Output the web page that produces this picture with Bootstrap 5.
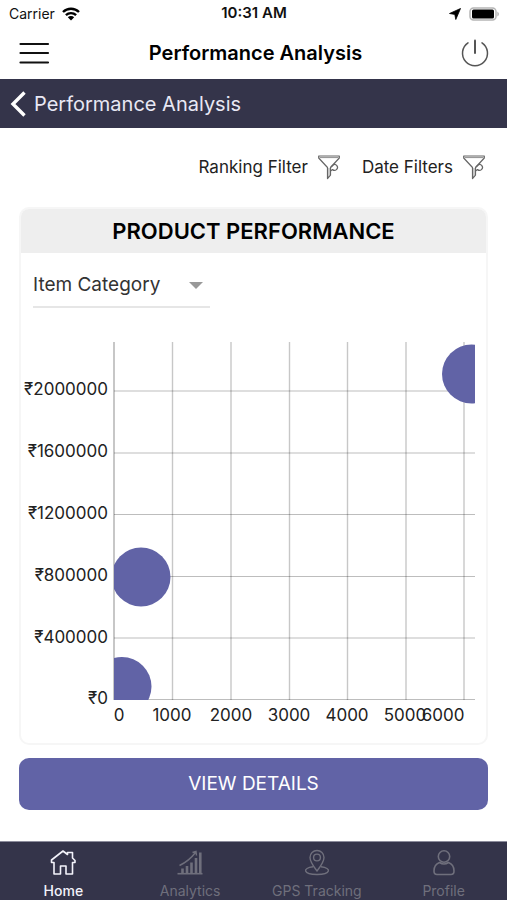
<!DOCTYPE html>
<html lang="en">
<head>
<meta charset="utf-8">
<meta name="viewport" content="width=device-width, initial-scale=1">
<title>Performance Analysis</title>
<link href="https://cdn.jsdelivr.net/npm/bootstrap@5.3.0/dist/css/bootstrap.min.css" rel="stylesheet">
<style>
  :root { --navy: #34344a; --violet: #6163a6; }
  body { font-family: Inter, "Noto Sans", sans-serif; color: #111; background: #fff; }
  svg { display: block; flex-shrink: 0; }
  .status-bar { height: 27px; font-size: 14px; padding: 0 8px 0 9px; }
  .status-bar .carrier { gap: 7px; }
  .status-time { font-size: 15px; font-weight: 600; }
  .app-head { height: 51px; margin-bottom: 1px; padding: 0 18px; }
  .app-title { font-size: 20px; font-weight: 600; color: #000; }
  .page-bar { background: var(--navy); height: 49px; padding: 0 10px; font-size: 20px; color: #e8e8f4; }
  .page-bar a { color: inherit; }
  .filter-row { padding: 21px 22px 22px; gap: 22px; }
  .filter-btn { font-size: 17px; line-height: 24px; color: #222; gap: 10px; padding: 5px 0; border: 0; }
  .page-body { padding: 0 19px; }
  .perf-card { border: 2px solid #f6f6f6; border-radius: 10px; overflow: hidden; }
  .perf-title { background: #eee; font-size: 22px; line-height: 26px; font-weight: 600; color: #000; padding: 9px 0; }
  .category-pick {
    width: 177px; height: 43px; margin: 12px 0 0 12px; padding: 0 28px 0 0;
    font-size: 19px; color: #333; border: 0; border-bottom: 2px solid #e6e6e6; border-radius: 0;
    background-color: transparent; background-position: right 7px center; background-size: 14px 8px;
    background-image: url("data:image/svg+xml,%3Csvg xmlns='http://www.w3.org/2000/svg' viewBox='0 0 14 8'%3E%3Cpath d='M0 0H14L7 7Z' fill='%23999'/%3E%3C/svg%3E");
  }
  .chart { width: 100%; height: auto; }
  .chart text { font-size: 17px; fill: #222; }
  .details-btn { background: var(--violet); color: #fff; font-size: 19px; line-height: 28px; margin-top: 13px; padding: 12px; border: 0; border-radius: 10px; }
  .details-btn:hover { background: #55579a; color: #fff; }
  .tab-bar { background: var(--navy); height: 59px; border-top: 1px solid #8c8c9c; }
  .tab-bar a { color: #6f6f7c; font-size: 14px; line-height: 18px; padding-top: 6px; gap: 6px; }
  .tab-bar a.current { color: #f2f2fa; font-weight: 500; }
</style>
<script src="https://cdn.jsdelivr.net/npm/bootstrap@5.3.0/dist/js/bootstrap.bundle.min.js"></script>
</head>
<body class="d-flex flex-column min-vh-100">

<svg width="0" height="0" class="position-absolute" aria-hidden="true">
  <symbol id="funnel" viewBox="0 0 22 26">
    <g fill="none" stroke="#666" stroke-width="1.200" stroke-linejoin="round">
      <path d="M.7 2H21.300V4L12.500 13.500V21L9.500 24.500V13.500L.7 4Z"/>
      <path d="M1.500 3.500H20.500" stroke="#999"/>
      <path d="M11 14V22" stroke="#aaa"/>
      <path d="M13 13L17 9.500M15 11A2.900 2.900 0 1 1 14.500 15.500L12.500 17"/>
    </g>
  </symbol>
</svg>

<div class="status-bar row g-0 align-items-center">
  <div class="carrier col d-flex align-items-center">
    <span>Carrier</span>
    <svg width="18" height="14" viewBox="0 0 18 14" role="img" aria-label="Wi-Fi">
      <g fill="none" stroke="#000" stroke-width="2.400"><path d="M1 5A11.500 11.500 0 0 1 17 5"/><path d="M3.900 8.200A7.400 7.400 0 0 1 14.100 8.200"/></g>
      <path d="M5.800 10.300A4.600 4.600 0 0 1 12.200 10.300L9 13.500Z"/>
    </svg>
  </div>
  <div class="col-auto status-time">10:31 AM</div>
  <div class="col d-flex align-items-center justify-content-end gap-2">
    <svg width="12" height="12" viewBox="0 0 12 12" aria-hidden="true"><path d="M11.500 .5L6.800 11.500L5.800 6.400L.5 5.500Z" stroke="#000" stroke-width=".8" stroke-linejoin="round"/></svg>
    <svg width="30" height="14" viewBox="0 0 30 14" role="img" aria-label="Battery full">
      <rect x="1" y="1" width="26" height="12" rx="3.500" fill="#fff" stroke="#b5b5b5" stroke-width="1.500"/>
      <rect x="3" y="2.500" width="22" height="9" rx="1.500"/>
      <path d="M28.300 4.500Q30 5.500 30 7T28.300 9.500Z" fill="#b5b5b5"/>
    </svg>
  </div>
</div>

<header class="app-head d-flex align-items-center justify-content-between">
  <button type="button" class="btn p-0 border-0" aria-label="Menu">
    <svg width="32" height="24" viewBox="0 0 32 24"><path d="M2.500 3H30M2.500 12H30M2.500 21.500H30" stroke="#111" stroke-width="2.200" stroke-linecap="round"/></svg>
  </button>
  <h1 class="app-title m-0">Performance Analysis</h1>
  <button type="button" class="btn p-0 border-0" aria-label="Log out">
    <svg width="28" height="28" viewBox="0 0 28 28" fill="none" stroke="#555" stroke-width="1.500" stroke-linecap="round"><path d="M7 3.800A12.500 12.500 0 1 0 21 3.800"/><path d="M14 1.500V14" stroke-width="2"/></svg>
  </button>
</header>

<nav class="page-bar d-flex align-items-center">
  <a href="#" class="d-flex align-items-center gap-2 text-decoration-none">
    <svg width="16" height="26" viewBox="0 0 16 26"><path d="M14.500 1.500L3 13L14.500 24.500" fill="none" stroke="#fff" stroke-width="3.400"/></svg>
    <span>Performance Analysis</span>
  </a>
</nav>

<main>
  <div class="filter-row d-flex justify-content-end">
    <button type="button" class="filter-btn btn d-flex align-items-center">Ranking Filter <svg width="22" height="26"><use href="#funnel"/></svg></button>
    <button type="button" class="filter-btn btn d-flex align-items-center">Date Filters <svg width="22" height="26"><use href="#funnel"/></svg></button>
  </div>

  <div class="page-body">
    <section class="perf-card">
      <h2 class="perf-title text-center m-0">PRODUCT PERFORMANCE</h2>
      <select class="category-pick form-select" aria-label="Item category"><option>Item Category</option></select>
      <svg class="chart" viewBox="21 308 465 435" role="img" aria-label="Product performance bubble chart">
        <clipPath id="plot"><rect x="114" y="340" width="361" height="360"/></clipPath>
        <path d="M114 391H475M114 453H475M114 514.500H475M114 576.500H475M114 638H475M114 699.500H475" stroke="#000" stroke-opacity=".26" stroke-width="1.200"/>
        <path d="M172.500 342V700M231 342V700M289.500 342V700M347.500 342V700M406 342V700M464 342V700" stroke="#000" stroke-opacity=".22" stroke-width="1.400"/>
        <path d="M114 342V700" stroke="#000" stroke-opacity=".28" stroke-width="1.600"/>
        <g clip-path="url(#plot)" fill="#6163a6">
          <circle cx="141" cy="577" r="29.500"/><circle cx="122" cy="686.500" r="29.500"/><circle cx="471.500" cy="374" r="29.500"/>
        </g>
        <g text-anchor="end">
          <text x="108" y="395">₹2000000</text><text x="108" y="457">₹1600000</text><text x="108" y="519">₹1200000</text>
          <text x="108" y="581">₹800000</text><text x="108" y="643">₹400000</text><text x="108" y="704">₹0</text>
        </g>
        <g text-anchor="middle">
          <text x="119" y="721">0</text><text x="172" y="721">1000</text><text x="231" y="721">2000</text><text x="289" y="721">3000</text>
          <text x="347" y="721">4000</text><text x="405" y="721">5000</text><text x="443" y="721">6000</text>
        </g>
      </svg>
    </section>
    <button type="button" class="details-btn btn w-100">VIEW DETAILS</button>
  </div>
</main>

<nav class="tab-bar row g-0 mt-auto text-center">
  <a href="#" class="col d-flex flex-column align-items-center text-decoration-none current" aria-current="page">
    <svg width="26" height="28" viewBox="0 0 26 28" fill="none" stroke="currentColor" stroke-width="1.600" stroke-linejoin="round"><path d="M4 14.500H1.500V12L13 3L17.500 6.500V4.500H22.500V10L25 12.500V14.500H22.500V26H16V18H10.500V26H4Z"/></svg>
    Home
  </a>
  <a href="#" class="col d-flex flex-column align-items-center text-decoration-none">
    <svg width="26" height="28" viewBox="0 0 26 28" fill="none" stroke="currentColor"><path d="M.5 25.700H25.500" stroke-width="1.600"/><path d="M5.500 25V20.500M10 25V18M14.500 25V14.500M19 25V10M23.300 25V4.500" stroke-width="2.600"/><path d="M2.500 17.500Q12 13 18.500 4.500M15.500 4.500L19 3.500L19.500 7.500" stroke-width="1.400"/></svg>
    Analytics
  </a>
  <a href="#" class="col d-flex flex-column align-items-center text-decoration-none">
    <svg width="26" height="28" viewBox="0 0 26 28" fill="none" stroke="currentColor" stroke-width="1.400" stroke-linejoin="round"><path d="M13 23Q6 14 6 9.500A7 7 0 0 1 20 9.500Q20 14 13 23Z"/><circle cx="13" cy="9.500" r="3.400"/><path d="M9 18.800C-2 20 -1 26.500 13 26.500S28 20 17 18.800"/></svg>
    GPS Tracking
  </a>
  <a href="#" class="col d-flex flex-column align-items-center text-decoration-none">
    <svg width="26" height="28" viewBox="0 0 26 28" fill="none" stroke="currentColor" stroke-width="1.600" stroke-linejoin="round"><circle cx="13" cy="8.500" r="5.700"/><path d="M8.500 14.500Q3 16.500 3 23Q3 26.500 6 26.500H20Q23 26.500 23 23Q23 16.500 17.500 14.500Q13 17.500 8.500 14.500Z"/></svg>
    Profile
  </a>
</nav>
</body>
</html>
